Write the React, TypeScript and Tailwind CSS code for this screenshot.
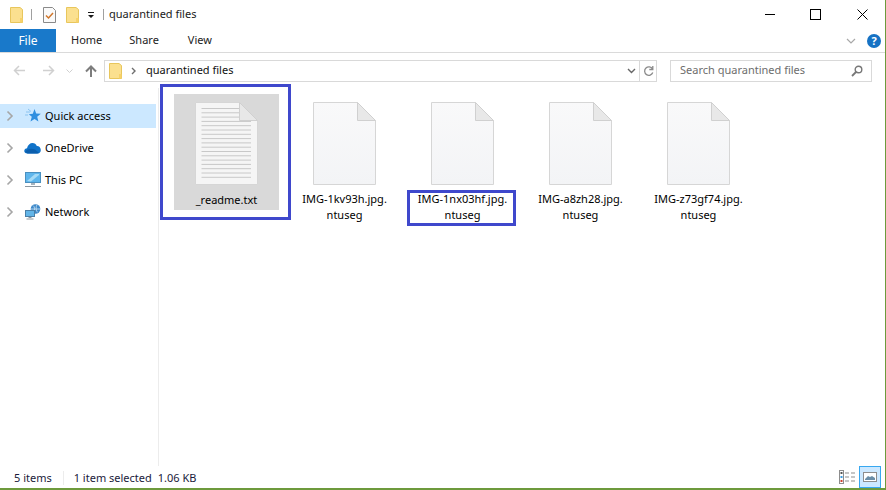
const Folder = ({ className = '' }: { className?: string }) => (
  <svg viewBox="0 0 13 16" className={className}>
    <path d="M.5.5h9.5l2.5 2v13H.5z" fill="#fbe08f" stroke="#e8c65c" />
    <path d="M10 11h2.5v4.5H10z" fill="#f7d26a" />
  </svg>
)

const Chevron = () => (
  <svg viewBox="0 0 8 12" className="h-3 w-2 shrink-0">
    <path d="M1.5 1.5 6 6l-4.5 4.5" fill="none" stroke="#a6a6a6" strokeWidth="1.6" />
  </svg>
)

const StarIcon = () => (
  <svg viewBox="0 0 16 16" className="h-4 w-4">
    <path d="M9.5 1l1.7 4.6 4.6.2-3.6 3 1.2 4.7-3.9-2.6-4 2.6 1.3-4.7-3-2.500 4-.5z" fill="#2f8fe0" />
    <path d="M1 4h4M0 7h3M3 1l3 2.500" stroke="#8cc4f0" strokeWidth="1" />
  </svg>
)

const CloudIcon = () => (
  <svg viewBox="0 0 17 12" className="h-3 w-[17px]">
    <path d="M3.5 11.5C1 11.500 0 10 .3 8.500.6 7 2 6.300 3 6.300 3.800 3 6 1 8.500 1c2 0 3.600 1 4.300 3 2-.2 4 1.500 4 4 0 2-1.300 3.500-3 3.500z" fill="#1173c9" />
    <path d="M1 10c2-3 6-4 10-2.500l4 3.500-2 .5H3.500z" fill="#0b5fae" />
  </svg>
)

const PcIcon = () => (
  <svg viewBox="0 0 16 16" className="h-4 w-4">
    <rect x=".5" y=".5" width="15" height="10" fill="#5fb6ec" stroke="#4a90c0" />
    <path d="M2 9l8-7h4v1L6 9.500z" fill="#a5daf6" />
    <path d="M6 11h4v2H6z" fill="#a7b3bd" />
    <path d="M0 14h16v1H0z" fill="#8d979f" />
  </svg>
)

const NetworkIcon = () => (
  <svg viewBox="0 0 16 16" className="h-4 w-4">
    <circle cx="10.500" cy="5" r="4.800" fill="#3d88c9" />
    <path d="M8 1.500c2 1 2 5 .5 7M12 .8c-1.500 2-1 6 .5 7.500M6 5h9" stroke="#cfe6f5" strokeWidth=".8" fill="none" />
    <rect x=".5" y="6.500" width="9" height="6" fill="#62b5e8" stroke="#4b7fa6" />
    <path d="M3.500 13h3v1h-3zM1.500 14.500h7v1h-7z" fill="#8d979f" />
  </svg>
)

const NavItem = ({ label, icon, active = false }: { label: string; icon: React.ReactNode; active?: boolean }) => (
  <div className={`mb-2 flex h-6 w-[156px] items-center pl-[6px] ${active ? 'bg-[#cce8ff]' : ''}`}>
    <Chevron />
    <div className="ml-[10px] flex w-[17px] justify-center">{icon}</div>
    <span className="ml-1 text-black">{label}</span>
  </div>
)

const lines = [0, 1, 2, 3, 4, 5, 6, 7, 8, 9, 10, 11, 12, 13, 14, 15, 16]

const DocIcon = ({ text = false }: { text?: boolean }) => (
  <svg viewBox="0 0 63 83" className="h-[83px] w-[63px] shrink-0">
    <defs>
      <linearGradient id="sheet" x1="0" y1="0" x2="0" y2="1">
        <stop offset="0" stopColor="#f9f9fa" />
        <stop offset="1" stopColor="#f3f4f6" />
      </linearGradient>
    </defs>
    <path d="M.5.5h44l18 18v64H.5z" fill={text ? '#f5f5f5' : 'url(#sheet)'} stroke="#d6d6d6" />
    <path d="M44.500.5v18h18z" fill="#e8e8e8" stroke="#d0d0d0" />
    {text &&
      lines.map((i) => (
        <path key={i} d={`M6.500 ${6.500 + i * 4.300}H${i < 3 ? 44 : 56}`} stroke="#c8c8c8" strokeWidth="1" />
      ))}
  </svg>
)

const FileTile = ({ first, second, selected = false, text = false }: { first: string; second?: string; selected?: boolean; text?: boolean }) => (
  <div className={`flex h-[116px] w-[105px] flex-col items-center pt-2 leading-4 text-black ${selected ? 'bg-[#d9d9d9]' : ''}`}>
    <DocIcon text={text} />
    <div className={`whitespace-nowrap text-center ${selected ? 'mt-[7px]' : 'mt-[6px]'}`}>
      <div>{first}</div>
      {second && <div>{second}</div>}
    </div>
  </div>
)

export default function App() {
  return (
    <div className="flex h-[490px] w-[886px] flex-col overflow-hidden border-r border-b-2 border-[#6d9a3c] bg-white font-['Noto_Sans',sans-serif] text-[11px]">
      <div className="flex h-[29px] shrink-0 items-center pl-[10px] text-[#1a1a1a]">
        <Folder className="h-4 w-[13px]" />
        <div className="ml-2 h-[11px] w-px bg-[#a0a0a0]" />
        <svg viewBox="0 0 13 16" className="ml-[11px] h-4 w-[13px]">
          <path d="M.5.500h9l3 3v12H.5z" fill="#fafafa" stroke="#8a8a8a" />
          <path d="M3 8.500l2.500 2.500L10 6" fill="none" stroke="#d0762a" strokeWidth="1.500" />
        </svg>
        <Folder className="ml-[10px] h-4 w-[13px]" />
        <svg viewBox="0 0 8 8" className="ml-2 h-2 w-2">
          <path d="M1 1h6v1H1zM1 4h6L4 7z" fill="#1a1a1a" />
        </svg>
        <div className="ml-2 h-[11px] w-px bg-[#a0a0a0]" />
        <span className="ml-[5px]">quarantined files</span>
        <div className="ml-auto flex items-center">
          <div className="mr-[35px] h-px w-[10px] bg-black" />
          <div className="mr-[36px] h-[11px] w-[11px] border border-black" />
          <svg viewBox="0 0 11 11" className="mr-[17px] h-[11px] w-[11px]">
            <path d="M.5.5l10 10M10.500.5l-10 10" stroke="#000" strokeWidth="1" />
          </svg>
        </div>
      </div>

      <div className="flex h-[24px] shrink-0 items-center border-b border-[#dadada]">
        <div className="flex h-[23px] w-14 items-center justify-center bg-[#1979ca] text-[12px] text-white">File</div>
        <span className="ml-[15px] text-[#222]">Home</span>
        <span className="ml-[27px] text-[#222]">Share</span>
        <span className="ml-[29px] text-[#222]">View</span>
        <div className="ml-auto mr-[4px] flex items-center">
          <svg viewBox="0 0 10 6" className="mr-[11px] h-[6px] w-[10px]">
            <path d="M1 1l4 4 4-4" fill="none" stroke="#a8a8a8" strokeWidth="1.200" />
          </svg>
          <div className="flex h-[14px] w-[14px] items-center justify-center rounded-full bg-[#1672c4] text-[11px] font-bold leading-none text-white">?</div>
        </div>
      </div>

      <div className="flex h-[35px] shrink-0 items-center pl-[13px]">
        <svg viewBox="0 0 12 11" className="h-[11px] w-3">
          <path d="M12 5.500H2M6 1L1.500 5.500 6 10" fill="none" stroke="#d0d0d0" strokeWidth="1.500" />
        </svg>
        <svg viewBox="0 0 12 11" className="ml-[18px] h-[11px] w-3">
          <path d="M0 5.500h10M6 1l4.500 4.500L6 10" fill="none" stroke="#d0d0d0" strokeWidth="1.500" />
        </svg>
        <svg viewBox="0 0 7 4" className="ml-[11px] h-1 w-[7px]">
          <path d="M.5.5l3 3 3-3" fill="none" stroke="#d0d0d0" />
        </svg>
        <svg viewBox="0 0 12 12" className="ml-[12px] h-3 w-3">
          <path d="M6 12V2M1 6.500L6 1.500l5 5" fill="none" stroke="#7d7d7d" strokeWidth="2" />
        </svg>
        <div className="ml-[7px] flex h-[22px] w-[553px] items-center border border-[#d9d9d9]">
          <Folder className="ml-1 h-4 w-[13px]" />
          <svg viewBox="0 0 5 8" className="ml-[9px] h-2 w-[5px]">
            <path d="M1 1l3 3-3 3" fill="none" stroke="#6e6e6e" strokeWidth="1.400" />
          </svg>
          <span className="ml-[10px] text-[#111]">quarantined files</span>
          <svg viewBox="0 0 9 6" className="ml-auto mr-[3px] h-[6px] w-[9px]">
            <path d="M1 1l3.500 3.500L8 1" fill="none" stroke="#666" strokeWidth="1.400" />
          </svg>
          <div className="flex h-full w-[17px] items-center justify-center border-l border-[#d9d9d9]">
            <svg viewBox="0 0 11 12" className="h-3 w-[11px]">
              <path d="M9.500 4A4.200 4.200 0 1 0 9.800 7.500M9.800 1v3.500H6.300" fill="none" stroke="#8a8a8a" strokeWidth="1.300" />
            </svg>
          </div>
        </div>
        <div className="ml-[13px] flex h-[22px] w-[202px] items-center justify-between border border-[#d9d9d9] pl-[9px] pr-[8px] text-[#6d6d6d]">
          <span>Search quarantined files</span>
          <svg viewBox="0 0 12 12" className="h-3 w-3">
            <circle cx="7.500" cy="4.500" r="3.300" fill="none" stroke="#777" strokeWidth="1.400" />
            <path d="M5 7l-4 4" stroke="#777" strokeWidth="1.800" />
          </svg>
        </div>
      </div>

      <div className="flex flex-1">
        <div className="w-[159px] shrink-0 border-r border-[#ececec] pt-4">
          <NavItem active label="Quick access" icon={<StarIcon />} />
          <NavItem label="OneDrive" icon={<CloudIcon />} />
          <NavItem label="This PC" icon={<PcIcon />} />
          <NavItem label="Network" icon={<NetworkIcon />} />
        </div>
        <div className="relative flex flex-1 gap-[13px] pl-[15px] pt-[6px]">
          <FileTile selected text first="_readme.txt" />
          <FileTile first="IMG-1kv93h.jpg." second="ntuseg" />
          <FileTile first="IMG-1nx03hf.jpg." second="ntuseg" />
          <FileTile first="IMG-a8zh28.jpg." second="ntuseg" />
          <FileTile first="IMG-z73gf74.jpg." second="ntuseg" />
          <div className="absolute left-[1px] top-[-4px] h-[136px] w-[131px] border-[3px] border-[#3f48cc]" />
          <div className="absolute left-[248px] top-[102px] h-[36px] w-[109px] border-[3px] border-[#3f48cc]" />
        </div>
      </div>

      <div className="flex h-[22px] shrink-0 items-center pl-[14px] text-[#1a1a3a]">
        <div className="flex items-center pt-[2px]">
          <span>5 items</span>
          <div className="ml-[11px] h-[14px] w-px bg-[#ececec]" />
          <span className="ml-[10px]">1 item selected</span>
          <span className="ml-[6px]">1.06 KB</span>
        </div>
        <div className="ml-auto mr-[4px] flex items-center">
          <svg viewBox="0 0 17 14" className="mr-[3px] h-[14px] w-[17px]">
            <rect x=".5" y=".5" width="4" height="13" fill="#fff" stroke="#8d8d8d" />
            <path d="M1.500 2h2v2h-2z" fill="#555" />
            <path d="M1.500 6h2v2h-2z" fill="#3b9be0" />
            <path d="M1.500 10h2v2h-2z" fill="#d04030" />
            <path d="M6 3h4M12 3h4M6 7h4M12 7h4M6 11h4M12 11h4" stroke="#8d8d8d" />
          </svg>
          <div className="flex h-[22px] w-[22px] items-center justify-center border border-[#38a8f0] bg-[#cce8ff]">
            <svg viewBox="0 0 14 10" className="h-[10px] w-[14px]">
              <rect x=".5" y=".5" width="13" height="9" fill="#fff" stroke="#8d8d8d" />
              <path d="M2 7l3-3 2 1 2-1 3 2v2H2z" fill="#6a8ea8" />
            </svg>
          </div>
        </div>
      </div>
    </div>
  )
}
